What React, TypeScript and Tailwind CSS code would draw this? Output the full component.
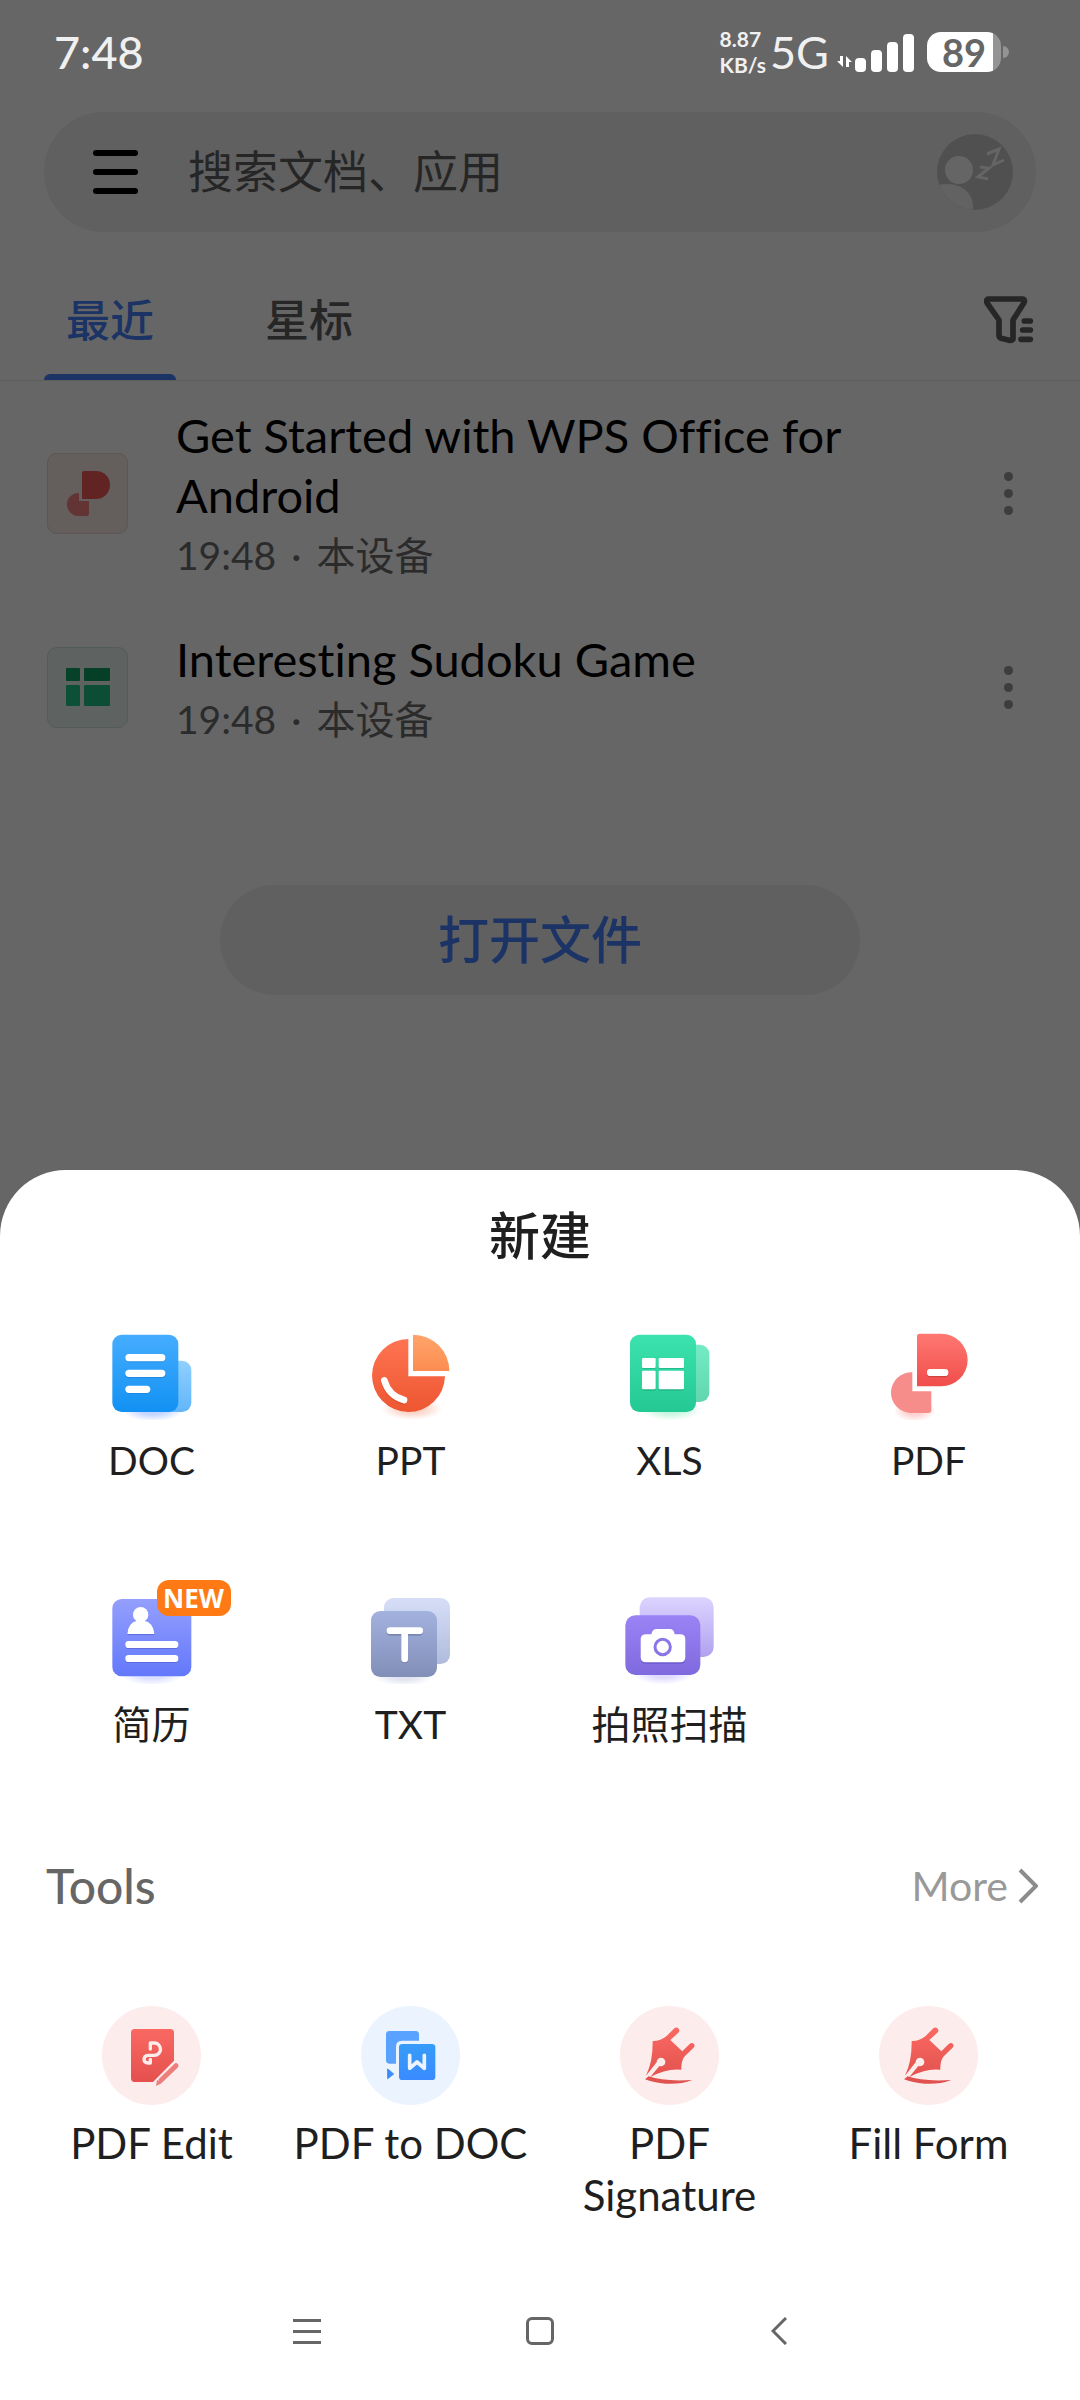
import type { ReactNode } from "react";
import { useState } from "react";

interface GradientInterface {
  id: string;
  from: string;
  to: string;
}

const Gradient = ({ id, from, to }: GradientInterface) => (
  <linearGradient id={id} x1="0" y1="0" x2="0" y2="1">
    <stop offset="0" stopColor={from} />
    <stop offset="1" stopColor={to} />
  </linearGradient>
);

// soft glow that sits under the "new file" icons
const Glow = ({ id, cx, cy, color }: { id: string; cx: number; cy: number; color: string }) => (
  <>
    <radialGradient id={id}>
      <stop offset="0.4" stopColor={color} stopOpacity="0.6" />
      <stop offset="1" stopColor={color} stopOpacity="0" />
    </radialGradient>
    <ellipse cx={cx} cy={cy} rx="92" ry="34" fill={`url(#${id})`} />
  </>
);

const DocIcon = () => (
  <svg className="size-24" viewBox="131 72 288 288" aria-hidden="true">
    <defs>
      <Gradient id="docFront" from="#46adff" to="#1191f3" />
      <Gradient id="docBack" from="#8fd0ff" to="#62b5fb" />
    </defs>
    <Glow id="docGlow" cx={278} cy={330} color="#9db8ff" />
    <rect x="290" y="182" width="103" height="154" rx="28" fill="url(#docBack)" />
    <rect x="156" y="104" width="198" height="232" rx="28" fill="url(#docFront)" />
    <g fill="#1576d0" opacity="0.5">
      <rect x="195" y="166" width="120" height="21" rx="10" />
      <rect x="195" y="213" width="120" height="21" rx="10" />
      <rect x="195" y="260" width="75" height="21" rx="10" />
    </g>
    <g fill="#fff">
      <rect x="195" y="162" width="120" height="22" rx="11" />
      <rect x="195" y="209" width="120" height="22" rx="11" />
      <rect x="195" y="257" width="75" height="22" rx="11" />
    </g>
  </svg>
);

const PptIcon = () => (
  <svg className="size-24" viewBox="908 72 288 288" aria-hidden="true">
    <defs>
      <Gradient id="pptMain" from="#ff7452" to="#ed5631" />
      <Gradient id="pptSlice" from="#ffa46b" to="#fc8d50" />
    </defs>
    <Glow id="pptGlow" cx={1055} cy={326} color="#f8b9a5" />
    <path d="M1044 117A109.500 109.500 0 1 0 1154 229L1044 229Z" fill="url(#pptMain)" />
    <path d="M1058 104A109 109 0 0 1 1167 213L1058 213Z" fill="url(#pptSlice)" />
    <path d="M972 246Q986 290 1030 304" fill="none" stroke="#b23a1d" strokeWidth="20" strokeLinecap="round" opacity="0.4" />
    <path d="M972 241Q985 287 1031 300" fill="none" stroke="#fff" strokeWidth="20" strokeLinecap="round" />
  </svg>
);

const XlsIcon = () => (
  <svg className="size-24" viewBox="126 72 288 288" aria-hidden="true">
    <defs>
      <Gradient id="xlsFront" from="#3de3ae" to="#23c892" />
      <Gradient id="xlsBack" from="#73ebc5" to="#62d6ae" />
    </defs>
    <Glow id="xlsGlow" cx={272} cy={328} color="#a5f0cd" />
    <rect x="290" y="134" width="98" height="172" rx="28" fill="url(#xlsBack)" />
    <rect x="150" y="104" width="198" height="232" rx="28" fill="url(#xlsFront)" />
    <g fill="#129468" opacity="0.4">
      <rect x="187" y="180" width="40" height="27" rx="4" />
      <rect x="236" y="180" width="75" height="27" rx="4" />
      <rect x="187" y="216" width="40" height="56" rx="4" />
      <rect x="236" y="216" width="75" height="56" rx="4" />
    </g>
    <g fill="#fff">
      <rect x="186" y="174" width="41" height="30" rx="4" />
      <rect x="236" y="174" width="76" height="30" rx="4" />
      <rect x="186" y="212" width="41" height="56" rx="4" />
      <rect x="236" y="212" width="76" height="56" rx="4" />
    </g>
  </svg>
);

const PdfIcon = () => (
  <svg className="size-24" viewBox="903 72 288 288" aria-hidden="true">
    <defs>
      <Gradient id="pdfTop" from="#ff7872" to="#f04d4a" />
    </defs>
    <g transform="translate(310 0) scale(0.68 1)">
      <Glow id="pdfGlow" cx={1020} cy={332} color="#fbb4b2" />
    </g>
    <path d="M997 217A61 61 0 0 0 991 339H1045Q1054 339 1054 330V274H997Z" fill="#f78d8a" />
    <path d="M1011 109Q1011 101 1019 101H1084A79 79 0 0 1 1084 259H1011Z" fill="url(#pdfTop)" />
    <rect x="1041" y="211" width="64" height="21" rx="10" fill="#a92f2d" opacity="0.5" />
    <rect x="1041" y="207" width="64" height="21" rx="10" fill="#fff" />
  </svg>
);

const ResumeIcon = () => (
  <svg className="size-24" viewBox="131 84 288 288" aria-hidden="true">
    <defs>
      <Gradient id="resume" from="#949ffd" to="#6378fb" />
    </defs>
    <Glow id="resumeGlow" cx={275} cy={343} color="#c5ccff" />
    <rect x="156" y="117" width="237" height="232" rx="28" fill="url(#resume)" />
    <g fill="#3f4cb8" opacity="0.4">
      <rect x="195" y="246" width="159" height="21" rx="10" />
      <rect x="195" y="288" width="159" height="21" rx="10" />
      <path d="M201 226Q201 182 241 182Q282 182 282 226Z" />
    </g>
    <g fill="#fff">
      <circle cx="241" cy="164" r="23" />
      <path d="M201 222Q203 188 230 182V176H252V182Q280 188 282 222Z" />
      <rect x="195" y="243" width="159" height="21" rx="10" />
      <rect x="195" y="285" width="159" height="21" rx="10" />
    </g>
  </svg>
);

const TxtIcon = () => (
  <svg className="size-24" viewBox="909 84 288 288" aria-hidden="true">
    <defs>
      <Gradient id="txtFront" from="#a3b1de" to="#818fb8" />
      <Gradient id="txtBack" from="#d7dff7" to="#b0bbdc" />
    </defs>
    <Glow id="txtGlow" cx={1032} cy={345} color="#ccd2e6" />
    <rect x="972" y="114" width="198" height="198" rx="28" fill="url(#txtBack)" />
    <rect x="933" y="153" width="198" height="198" rx="28" fill="url(#txtFront)" />
    <path d="M990 217H1079M1034 217V300" fill="none" stroke="#5f6c96" strokeWidth="20" strokeLinecap="round" opacity="0.5" />
    <path d="M990 212H1079M1034 212V297" fill="none" stroke="#fff" strokeWidth="20" strokeLinecap="round" />
  </svg>
);

const ScanIcon = () => (
  <svg className="size-24" viewBox="185 84 288 288" aria-hidden="true">
    <defs>
      <Gradient id="scanFront" from="#9a83f5" to="#7f69de" />
      <Gradient id="scanBack" from="#dcd4ff" to="#b0a1ee" />
    </defs>
    <Glow id="scanGlow" cx={308} cy={340} color="#cbc0ff" />
    <rect x="238" y="112" width="222" height="179" rx="30" fill="url(#scanBack)" />
    <rect x="195" y="166" width="225" height="179" rx="30" fill="url(#scanFront)" />
    <path d="M258 226H273Q276 210 289 210H328Q341 210 343 226H360Q375 226 375 241V296Q375 311 360 311H256Q241 311 241 296V241Q241 226 258 226Z" fill="#5a45b8" opacity="0.5" />
    <path d="M258 223H273Q276 207 289 207H328Q341 207 343 223H360Q375 223 375 238V292Q375 307 360 307H256Q241 307 241 292V238Q241 223 258 223Z" fill="#fff" />
    <circle cx="307" cy="261" r="23" fill="none" stroke="#8a75e6" strokeWidth="9" />
  </svg>
);

const PdfEditIcon = () => (
  <svg className="size-[99px] rounded-full bg-[#fdecec]" viewBox="126 78 297 297" aria-hidden="true">
    <defs>
      <Gradient id="pdfEdit" from="#f96962" to="#e5504e" />
    </defs>
    <path d="M224 147H331Q342 147 342 158V242L279 306H224Q213 306 213 295V158Q213 147 224 147Z" fill="url(#pdfEdit)" />
    <path
      d="M271 207V189H283A18 18 0 0 1 283 226H264Q252 227 252 239Q253 249 264 249H271V238"
      fill="none"
      stroke="#fdecec"
      strokeWidth="10"
      strokeLinecap="round"
      strokeLinejoin="round"
    />
    <path d="M348 257L303 301" fill="none" stroke="#ec7e7c" strokeWidth="15" strokeLinecap="round" />
    <path d="M288 318L291 300L306 309Z" fill="#ec7e7c" />
  </svg>
);

const PdfToDocIcon = () => (
  <svg className="size-[99px] rounded-full bg-[#eaf3fe]" viewBox="903 78 297 297" aria-hidden="true">
    <defs>
      <Gradient id="toDoc" from="#369cf9" to="#3a8bff" />
    </defs>
    <path d="M988 153H1067Q1077 153 1077 163V182H1026Q1008 182 1008 200V251H988Q978 251 978 241V163Q978 153 988 153Z" fill="#5aa2ff" />
    <rect x="1017" y="192" width="109" height="108" rx="10" fill="url(#toDoc)" />
    <path d="M983 267L1001 282L983 296Z" fill="#3c8cfa" stroke="#3c8cfa" strokeWidth="3" strokeLinejoin="round" />
    <path d="M1049 226V265L1071 246L1093 265V226" fill="none" stroke="#eaf3fe" strokeWidth="11" strokeLinejoin="round" strokeLinecap="round" />
  </svg>
);

const PenIcon = ({ id }: { id: string }) => (
  <svg className="size-[99px] rounded-full bg-[#fdecec]" viewBox="180 78 297 297" aria-hidden="true">
    <defs>
      <Gradient id={id} from="#fa6a62" to="#e3524f" />
    </defs>
    <path
      d="M278 183Q300 184 319 169L343 145Q350 139 356 146Q361 152 355 158L331 180L367 214L389 192Q396 186 402 192Q406 198 400 204L375 228Q363 241 364 269Q320 264 271 291L298 258A13 13 0 1 0 290 247L258 287Q279 245 278 183Z"
      fill={`url(#${id})`}
    />
    <path d="M255 298L266 289Q310 305 397 300Q360 314 317 311Q280 308 255 298Z" fill="#e0524f" />
  </svg>
);

const FileIconPdf = () => (
  <svg className="size-[81px] shrink-0" viewBox="0 0 81 81" aria-hidden="true">
    <rect x="0.500" y="0.500" width="80" height="80" rx="9" fill="#645e5d" stroke="#5c5656" />
    <path d="M32 40A11.500 11.500 0 0 0 31 63H40Q42 63 42 61V48H32Z" fill="#633434" />
    <path d="M35 20Q35 18 37 18H49A14 14 0 0 1 49 46H35Z" fill="#622423" />
  </svg>
);

const FileIconXls = () => (
  <svg className="size-[81px] shrink-0" viewBox="0 0 81 81" aria-hidden="true">
    <rect x="0.500" y="0.500" width="80" height="80" rx="9" fill="#5e6361" stroke="#545c59" />
    <rect x="19" y="21" width="14" height="13" rx="1" fill="#06412a" />
    <rect x="37" y="21" width="26" height="13" rx="1" fill="#063f28" />
    <rect x="19" y="38" width="14" height="21" rx="1" fill="#0c5137" />
    <rect x="37" y="38" width="26" height="21" rx="1" fill="#0b4e35" />
  </svg>
);

const files = [
  { title: "Get Started with WPS Office for Android", time: "19:48", place: "本设备", icon: <FileIconPdf /> },
  { title: "Interesting Sudoku Game", time: "19:48", place: "本设备", icon: <FileIconXls /> },
];

const newItems = [
  { label: "DOC", icon: <DocIcon /> },
  { label: "PPT", icon: <PptIcon /> },
  { label: "XLS", icon: <XlsIcon /> },
  { label: "PDF", icon: <PdfIcon /> },
  { label: "简历", icon: <ResumeIcon />, isNew: true },
  { label: "TXT", icon: <TxtIcon /> },
  { label: "拍照扫描", icon: <ScanIcon /> },
];

const tools = [
  { label: "PDF Edit", icon: <PdfEditIcon /> },
  { label: "PDF to DOC", icon: <PdfToDocIcon /> },
  { label: "PDF Signature", icon: <PenIcon id="penSign" /> },
  { label: "Fill Form", icon: <PenIcon id="penForm" /> },
];

const StatusBar = () => (
  <header className="flex h-28 items-start justify-between pt-6 pr-[71px] pl-[54px] text-[#f0f0f0]">
    <span className="text-[45px] leading-[56px] font-medium">7:48</span>
    <div className="flex h-14 items-center">
      <div className="mr-1 text-[21px] leading-[26px] font-bold">
        <div>8.87</div>
        <div>KB/s</div>
      </div>
      <span className="mr-2 text-[45px] leading-[56px]">5G</span>
      <svg className="mr-3 h-10 w-[78px]" viewBox="0 0 78 40" fill="#fff" aria-hidden="true">
        <path d="M0 29H3V24H6V35ZM9 24L15 30H12V35H9Z" />
        <rect x="18" y="26" width="11" height="14" rx="4" />
        <rect x="34" y="18" width="11" height="22" rx="4" />
        <rect x="50" y="10" width="11" height="30" rx="4" />
        <rect x="66" y="2" width="11" height="38" rx="4" />
      </svg>
      <div className="flex h-10 w-[74px] items-center justify-center rounded-[14px] bg-linear-to-r from-white from-89% to-[#949494] to-89% text-[38px] font-bold text-[#666]">
        89
      </div>
      <div className="ml-0.5 h-3 w-1.5 rounded-r-full bg-[#949494]" />
    </div>
  </header>
);

const SearchBar = () => (
  <div className="mx-11 flex h-[120px] items-center rounded-full bg-[#606060] pr-[23px] pl-[49px]">
    <button aria-label="Menu" className="flex w-[45px] flex-col gap-[13px]">
      <span className="h-[6px] rounded-full bg-black" />
      <span className="h-[6px] rounded-full bg-black" />
      <span className="h-[6px] rounded-full bg-black" />
    </button>
    <input
      type="text"
      aria-label="搜索文档、应用"
      placeholder="搜索文档、应用"
      className="ml-[50px] h-full min-w-0 flex-1 bg-transparent text-[45px] outline-none placeholder:text-[#262626]"
    />
    <button aria-label="Account">
      <svg className="size-[76px]" viewBox="0 0 76 76" aria-hidden="true">
        <defs>
          <clipPath id="avatarClip">
            <circle cx="38" cy="38" r="38" />
          </clipPath>
        </defs>
        <g clipPath="url(#avatarClip)">
          <rect width="76" height="76" fill="#505050" />
          <circle cx="22" cy="36" r="14" fill="#656565" />
          <path d="M0 51Q14 48 24 53Q37 60 36 76H0Z" fill="#626262" />
        </g>
        <g fill="none" stroke="#656565" strokeWidth="3">
          <path d="M50 20L62 15L56 31L67 26" />
          <path d="M43 33L52 34L41 43L51 45" />
        </g>
      </svg>
    </button>
  </div>
);

interface TabInterface {
  label: string;
  active: boolean;
  onClick: () => void;
}

const Tab = ({ label, active, onClick }: TabInterface) => (
  <button role="tab" aria-selected={active} onClick={onClick} className="flex w-[132px] flex-col pt-[58px]">
    <span
      className={
        active
          ? "w-full text-center text-[44px] leading-[60px] font-medium text-[#1c3365]"
          : "w-full text-center text-[44px] leading-[60px] font-medium text-[#262626]"
      }
    >
      {label}
    </span>
    <span className={active ? "mt-6 h-[6px] w-full rounded-t-md bg-[#1c3365]" : "mt-6 h-[6px] w-full"} />
  </button>
);

interface SheetItemInterface {
  label: string;
  icon: ReactNode;
  isNew?: boolean;
}

const NewItem = ({ label, icon, isNew }: SheetItemInterface) => (
  <button className="relative flex flex-col items-center gap-[14px] px-2 text-[39px] leading-[52px] text-[#1f1f1f]">
    {icon}
    <span>{label}</span>
    {isNew && (
      <span className="absolute -top-2 left-1/2 ml-[5px] flex h-9 w-[74px] items-center justify-center rounded-xl bg-[#ff7a14] font-['Noto_Sans',sans-serif] text-[26px] font-bold text-white">
        NEW
      </span>
    )}
  </button>
);

const ToolItem = ({ label, icon }: SheetItemInterface) => (
  <button className="flex flex-col items-center gap-3 px-2 text-[42px] leading-[52px] text-[#1f1f1f]">
    {icon}
    <span>{label}</span>
  </button>
);

export default function App() {
  const [tab, setTab] = useState("recent");

  return (
    <div className="flex min-h-screen flex-col bg-[#666] font-['Lato','Noto_Sans_CJK_SC',sans-serif] [font-variant-ligatures:none]">
      <StatusBar />
      <SearchBar />

      <div className="flex items-start justify-between border-b border-[#5c5c5c] pr-[46px] pl-11">
        <div role="tablist" className="flex gap-[67px]">
          <Tab label="最近" active={tab === "recent"} onClick={() => setTab("recent")} />
          <Tab label="星标" active={tab === "star"} onClick={() => setTab("star")} />
        </div>
        <button aria-label="Filter" className="mt-16">
          <svg className="h-12 w-[50px]" viewBox="252 560 150 144" fill="none" stroke="#262626" aria-hidden="true">
            <path
              d="M264 569H370Q376 573 371 582L339 632V690Q335 694 328 693L303 687Q297 684 297 678V632L262 582Q257 573 264 569Z"
              strokeWidth="17"
              strokeLinejoin="round"
            />
            <path d="M373 635H391M368 662H391M363 690H391" strokeWidth="17" strokeLinecap="round" />
          </svg>
        </button>
      </div>

      <ul>
        {files.map(file => (
          <li key={file.title} className="flex items-center py-5 pr-[50px] pl-[47px]">
            {file.icon}
            <div className="ml-12 flex-1 pt-1 pr-28">
              <h3 className="text-[47px] leading-[60px] text-black">{file.title}</h3>
              <p className="flex gap-[15px] text-[39px] leading-[60px] text-[#2b2b2b]">
                <span>{file.time}</span>
                <span>·</span>
                <span>{file.place}</span>
              </p>
            </div>
            <button aria-label="More options" className="flex w-11 flex-col items-center gap-2">
              <span className="size-[9px] rounded-full bg-[#3d3d3d]" />
              <span className="size-[9px] rounded-full bg-[#3d3d3d]" />
              <span className="size-[9px] rounded-full bg-[#3d3d3d]" />
            </button>
          </li>
        ))}
      </ul>

      <div className="mt-[116px] mb-[175px] flex justify-center px-[220px]">
        <button className="h-[110px] w-full rounded-full bg-[#606060] text-[51px] font-medium text-[#1c3365]">打开文件</button>
      </div>

      <section className="mt-auto flex flex-1 flex-col rounded-t-[66px] bg-white pt-7">
        <h2 className="text-center text-[51px] leading-[75px] font-medium text-[#1f1f1f]">新建</h2>

        <div className="mt-[51px] grid grid-cols-4 gap-y-[102px] px-[22px]">
          {newItems.map(item => (
            <NewItem key={item.label} label={item.label} icon={item.icon} isNew={item.isNew} />
          ))}
        </div>

        <div className="mt-[106px] flex items-center justify-between pr-[42px] pl-[46px]">
          <h2 className="text-[48px] leading-[60px] font-medium text-[#666]">Tools</h2>
          <a href="#more" className="flex items-center gap-[10px] text-[41px] leading-[60px] text-[#999]">
            More
            <svg className="h-9 w-5" viewBox="0 0 20 36" fill="none" stroke="#8c8c8c" strokeWidth="4" aria-hidden="true">
              <path d="M2 2L18 18L2 34" />
            </svg>
          </a>
        </div>

        <div className="mt-[90px] grid grid-cols-4 items-start px-[22px]">
          {tools.map(item => (
            <ToolItem key={item.label} label={item.label} icon={item.icon} />
          ))}
        </div>

        <nav className="mt-auto flex h-[138px] items-center justify-center gap-[205px]">
          <button aria-label="Recent apps" className="flex w-7 flex-col gap-2">
            <span className="h-[3px] bg-[#666]" />
            <span className="h-[3px] bg-[#666]" />
            <span className="h-[3px] bg-[#666]" />
          </button>
          <button aria-label="Home" className="size-7 rounded-md border-3 border-[#666]" />
          <button aria-label="Back" className="flex w-7 justify-end">
            <svg className="h-7 w-4" viewBox="0 0 16 28" fill="none" stroke="#666" strokeWidth="3" aria-hidden="true">
              <path d="M15 1L2 14L15 27" />
            </svg>
          </button>
        </nav>
      </section>
    </div>
  );
}
